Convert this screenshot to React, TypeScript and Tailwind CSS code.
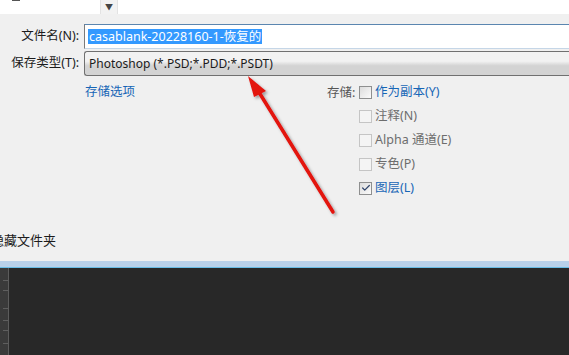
import { Check } from "lucide-react";

const font = "font-['Noto_Sans','Noto_Sans_CJK_SC',sans-serif]";

type Opt = { label: string; enabled: boolean; checked?: boolean };

const options: Opt[] = [
  { label: "作为副本(Y)", enabled: true },
  { label: "注释(N)", enabled: false },
  { label: "Alpha 通道(E)", enabled: false },
  { label: "专色(P)", enabled: false },
  { label: "图层(L)", enabled: true, checked: true },
];

function CheckBox({ enabled, checked }: { enabled: boolean; checked?: boolean }) {
  return (
    <span
      className={
        "flex h-[13px] w-[13px] items-center justify-center border " +
        (enabled
          ? "border-[#8e8f8f] bg-gradient-to-br from-[#dcdcdc] to-[#fbfbfb]"
          : "border-[#c5c5c5] bg-[#f4f4f4]")
      }
    >
      {checked && <Check size={10} strokeWidth={3} className="text-[#31456b]" />}
    </span>
  );
}

function Arrow() {
  return (
    <svg className="pointer-events-none absolute left-0 top-0" width="569" height="355">
      <defs>
        <filter id="sh" x="-20%" y="-20%" width="140%" height="140%">
          <feDropShadow dx="2" dy="2" stdDeviation="1.5" floodColor="#000" floodOpacity="0.35" />
        </filter>
      </defs>
      <g filter="url(#sh)">
        <line x1="333" y1="212" x2="257" y2="89" stroke="#e3120f" strokeWidth="3.5" strokeLinecap="round" />
        <polygon points="248,76 266,91 254,97" fill="#e3120f" />
      </g>
    </svg>
  );
}

export default function App() {
  return (
    <div className={`relative h-[355px] w-[569px] overflow-hidden bg-[#f0f0f0] text-[12.5px] text-[#1b1b1b] ${font}`}>
      {/* top strip of the file list */}
      <div className="flex h-[14px]">
        <div className="relative w-[100px] bg-white">
          <div className="absolute left-[12px] top-[-1px] h-[2px] w-[8px] bg-[#555]" />
        </div>
        <div className="flex w-[18px] items-start justify-center border-x border-[#e3e3e3] bg-[#f2f2f2] pt-[3px] text-[8px] leading-none text-[#444]">
          ▼
        </div>
        <div className="flex-1 bg-white" />
      </div>

      {/* file name + type */}
      <div className="mt-[10px] flex flex-col gap-[2px]">
        <div className="flex items-center">
          <div className="w-[84px] pr-[5px] text-right">文件名(N):</div>
          <div className="flex h-[25px] flex-1 items-center border border-r-0 border-[#7a7a7a] border-t-[#5b86b0] border-b-[#c5d6e7] bg-white pl-[3px]">
            <span className="bg-[#3399ff] px-[1px] leading-[15px] text-white">casablank-20228160-1-恢复的</span>
          </div>
        </div>
        <div className="flex items-center">
          <div className="w-[84px] pr-[5px] text-right">保存类型(T):</div>
          <div className="flex h-[25px] flex-1 items-center rounded-l-[3px] border border-r-0 border-[#707070] bg-gradient-to-b from-[#f2f2f2] from-40% to-[#d3d3d3] to-60% pl-[4px] text-[12px]">
            Photoshop (*.PSD;*.PDD;*.PSDT)
          </div>
        </div>
      </div>

      {/* save options */}
      <div className="flex h-[155px] pt-[7px]">
        <div className="w-[327px] pl-[85px]">
          <span className="text-[#1766b6]">存储选项</span>
        </div>
        <div className="flex">
          <div className="w-[32px] pt-[1px] text-[#555]">存储:</div>
          <div className="flex flex-col gap-[6px]">
            {options.map((o) => (
              <div key={o.label} className="flex h-[18px] items-center gap-[3px]">
                <CheckBox enabled={o.enabled} checked={o.checked} />
                <span className={o.enabled ? "text-[#1766b6]" : "text-[#6d6d6d]"}>{o.label}</span>
              </div>
            ))}
          </div>
        </div>
      </div>

      <div className="ml-[-9px] h-[30px] text-[13px] text-[#1b1b1b]">隐藏文件夹</div>

      {/* workspace below the dialog */}
      <div className="h-[6px] bg-[#b9d1ea]" />
      <div className="h-[1px] bg-[#69bde6]" />
      <div className="flex h-[87px] bg-[#282828]">
        <div className="relative w-[8px] bg-[#3a3a3a]">
          {[12, 22, 40, 52, 62, 75].map((y) => (
            <div key={y} className="absolute right-0 h-[1px] w-[5px] bg-[#5e5e5e]" style={{ top: y }} />
          ))}
        </div>
        <div className="w-[1px] bg-[#5c5c5c]" />
        <div className="flex-1" />
      </div>

      <Arrow />
    </div>
  );
}
